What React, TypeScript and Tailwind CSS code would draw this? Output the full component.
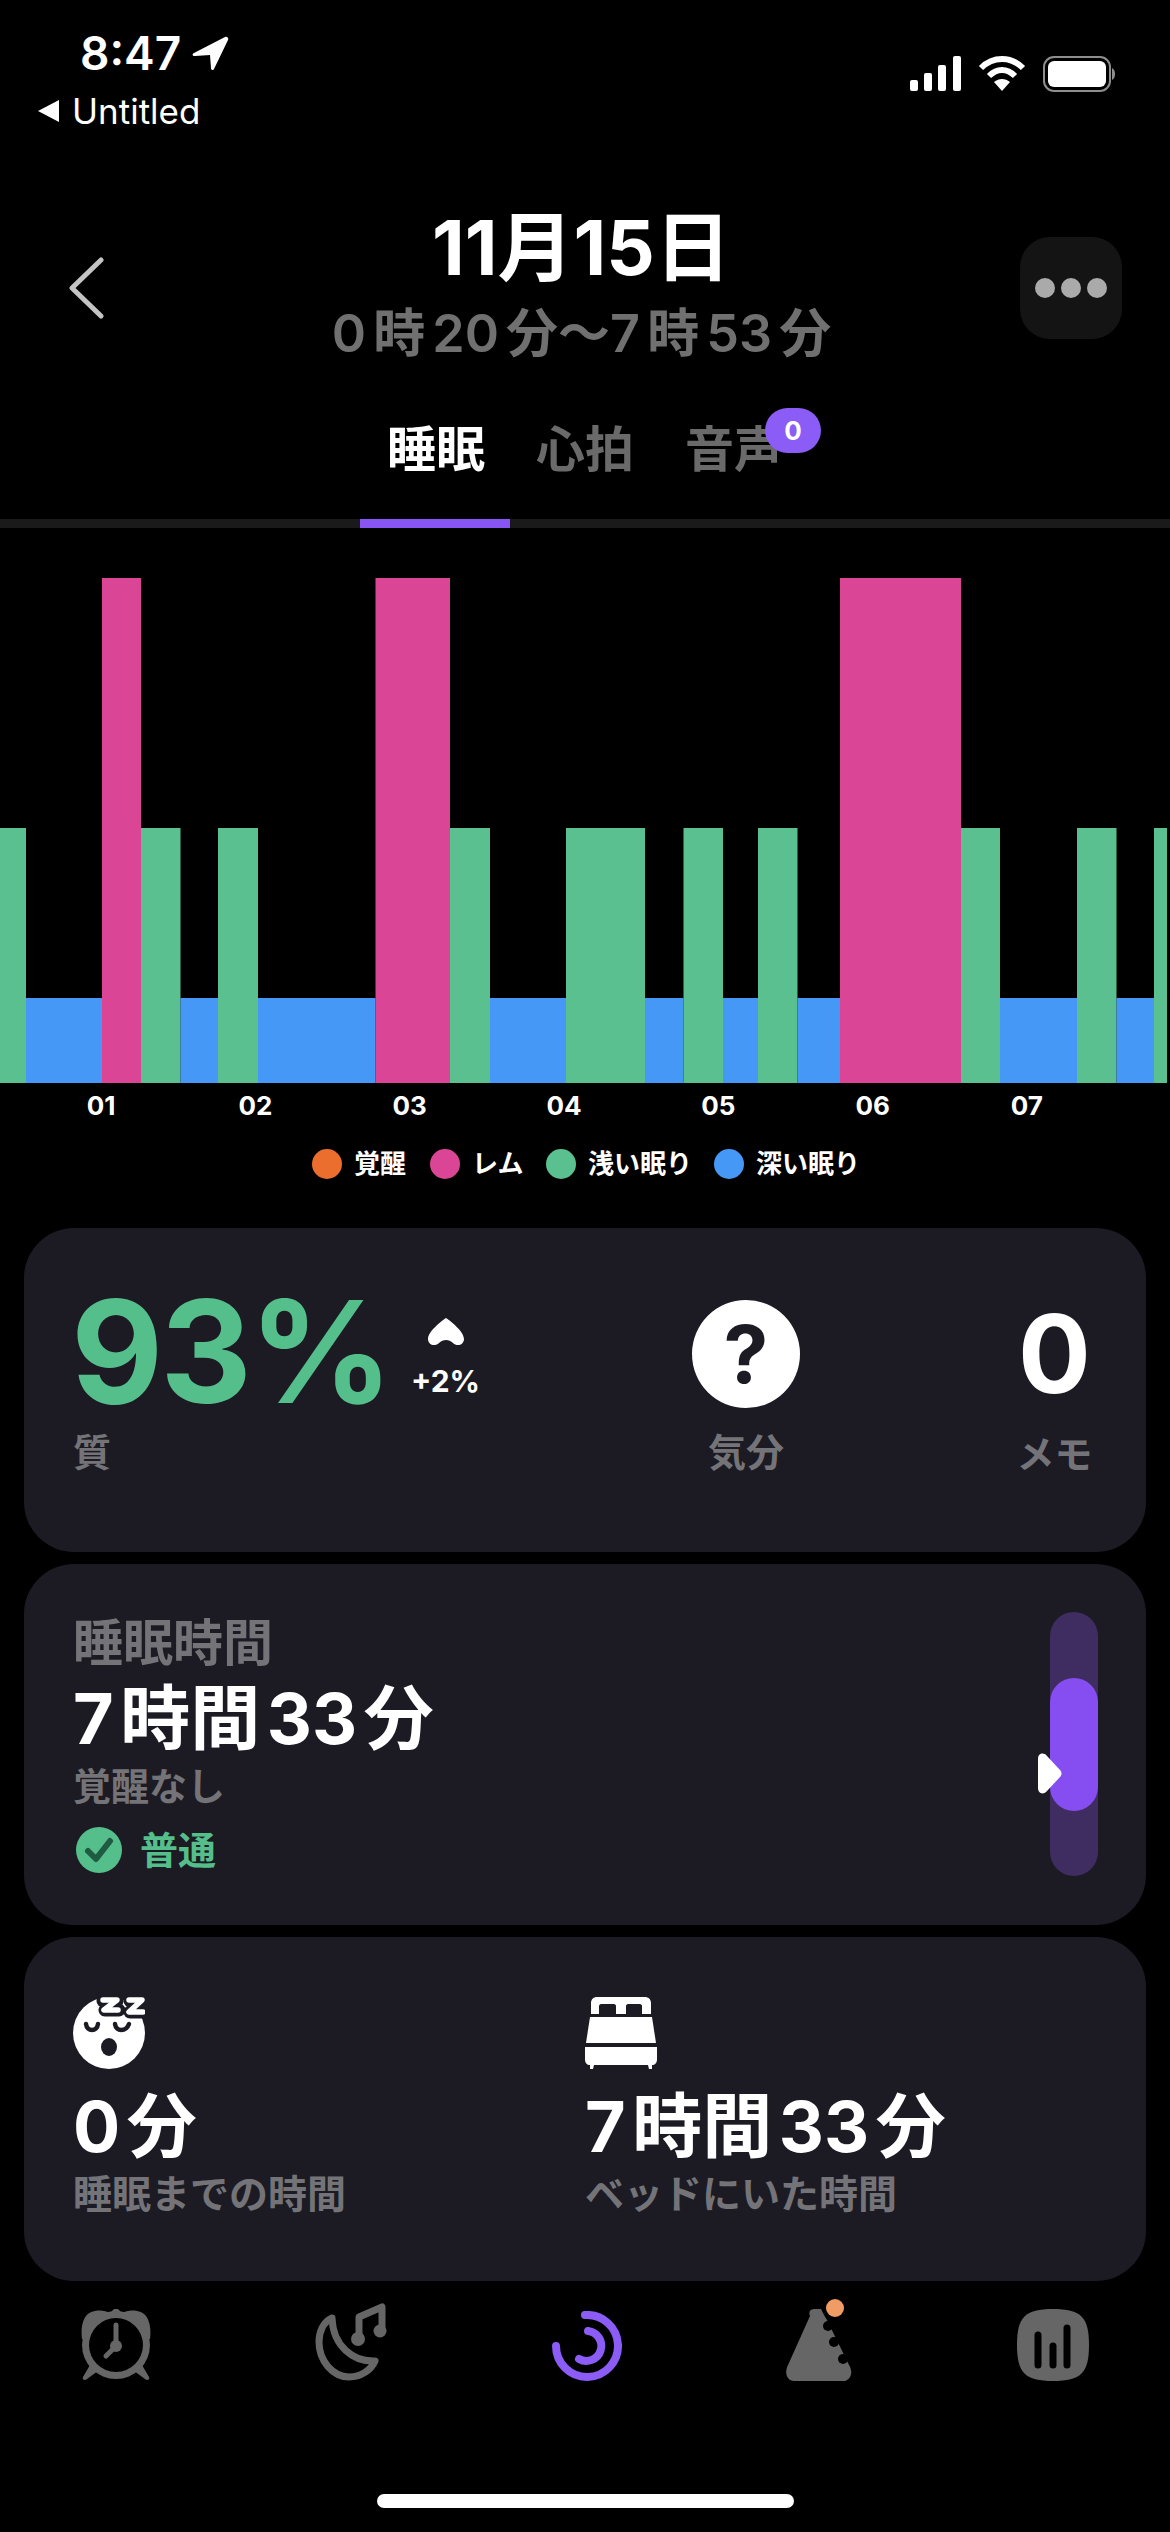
const sans = "font-[Inter,'Noto_Sans_CJK_JP',sans-serif]";

const segments: [number, number, string][] = [
  [0, 26, "green"], [26, 102, "blue"], [102, 141, "pink"], [141, 180.5, "green"],
  [180.5, 218, "blue"], [218, 258, "green"], [258, 375.5, "blue"], [375.5, 450, "pink"],
  [450, 490, "green"], [490, 566, "blue"], [566, 645, "green"], [645, 683.5, "blue"],
  [683.5, 723, "green"], [723, 758, "blue"], [758, 797.5, "green"], [797.5, 840, "blue"],
  [840, 961, "pink"], [961, 1000, "green"], [1000, 1077, "blue"], [1077, 1116.5, "green"],
  [1116.5, 1154, "blue"], [1154, 1167, "green"],
];

const stage: Record<string, { y: number; color: string }> = {
  pink: { y: 0, color: "#da4595" },
  green: { y: 250, color: "#5ac08f" },
  blue: { y: 420, color: "#4698f7" },
};

const legend = [
  { label: "覚醒", color: "bg-[#ec6e2e]", w: "w-[50px]", gap: "mr-[26px]" },
  { label: "レム", color: "bg-[#da4595]", w: "w-[47px]", gap: "mr-[27px]" },
  { label: "浅い眠り", color: "bg-[#5ac08f]", w: "w-[99px]", gap: "mr-[27px]" },
  { label: "深い眠り", color: "bg-[#4698f7]", w: "w-[97px]", gap: "" },
];

function Chart() {
  return (
    <svg width="1170" height="505" viewBox="0 0 1170 505" className="block mt-[50px]">
      {segments.map(([a, b, k]) => (
        <rect key={a} x={a} y={stage[k].y} width={b - a} height={505 - stage[k].y} fill={stage[k].color} />
      ))}
    </svg>
  );
}

function StatusIcons() {
  return (
    <div className="flex items-start gap-[17px] pt-[56px] pr-[55px]">
      <svg width="51" height="35" viewBox="0 0 51 35" fill="#fff">
        <rect x="0" y="24" width="8" height="11" rx="2" />
        <rect x="14" y="17" width="8" height="18" rx="2" />
        <rect x="28" y="9" width="8" height="26" rx="2" />
        <rect x="43" y="0" width="8" height="35" rx="2" />
      </svg>
      <svg width="48" height="35" viewBox="0 0 48 35" fill="none" stroke="#fff" strokeWidth="6">
        <path d="M3 12 C15 0 33 0 45 12" />
        <path d="M11 20 C19 12 29 12 37 20" />
        <path d="M24 35 L16 26 C21 22 27 22 32 26 Z" fill="#fff" stroke="none" />
      </svg>
      <svg width="72" height="36" viewBox="0 0 72 36">
        <rect x="1" y="1" width="66" height="34" rx="10" fill="none" stroke="#8e8e8e" strokeWidth="2" />
        <rect x="5" y="5" width="58" height="26" rx="6" fill="#fff" />
        <path d="M69 12 C71 13 72 15 72 18 C72 21 71 23 69 24 Z" fill="#8e8e8e" />
      </svg>
    </div>
  );
}

function StatusBar() {
  return (
    <div className="flex justify-between h-[130px]">
      <div className="flex flex-col">
        <div className="flex items-center gap-[11px] pl-[80px] pt-[27px]">
          <span className={`${sans} text-[46px] leading-[52px] font-semibold text-white`}>8:47</span>
          <svg width="37" height="34" viewBox="0 0 37 34" fill="#fff">
            <path d="M2 17 L33 1 C35 0 37 2 36 4 L22 33 C21 35 19 34 19 32 L18 19 L3 20 C0 20 0 18 2 17 Z" />
          </svg>
        </div>
        <div className="flex items-center gap-[13px] pl-[38px] mt-[11px]">
          <svg width="21" height="22" viewBox="0 0 21 22" fill="#fff">
            <path d="M0 11 L21 0 V22 Z" />
          </svg>
          <span className={`${sans} text-[35px] leading-[42px] text-white`}>Untitled</span>
        </div>
      </div>
      <StatusIcons />
    </div>
  );
}

function Header() {
  return (
    <div className="flex items-center h-[160px] mt-[78px]">
      <div className="w-[143px] pl-[68px]">
        <svg width="36" height="62" viewBox="0 0 36 62" fill="none" stroke="#c4c4c4" strokeWidth="5" strokeLinecap="round" strokeLinejoin="round" className="block">
          <path d="M33 3 L4 31 L33 59" />
        </svg>
      </div>
      <div className="flex-1 flex flex-col items-center">
        <div className={`${sans} text-[76px] leading-[84px] font-bold text-white`}>11月15日</div>
        <div className={`${sans} text-[52px] leading-[62px] font-semibold text-[#707070] mt-[14px] mb-[6px] [word-spacing:-6px]`}>0 時 20 分〜7 時 53 分</div>
      </div>
      <div className="w-[150px]">
        <div className="w-[102px] h-[102px] rounded-[30px] bg-[#141414] flex items-center justify-center gap-[6px]">
          <span className="w-[20px] h-[20px] rounded-full bg-[#aaaaaa]" />
          <span className="w-[20px] h-[20px] rounded-full bg-[#aaaaaa]" />
          <span className="w-[20px] h-[20px] rounded-full bg-[#aaaaaa]" />
        </div>
      </div>
    </div>
  );
}

function Tabs() {
  return (
    <div className="mt-[54px]">
      <div className={`${sans} flex text-[49px] leading-[56px] font-bold pl-[387px] gap-[51px] h-[56px]`}>
        <span className="text-white">睡眠</span>
        <span className="text-[#6a6a6a]">心拍</span>
        <span className="relative text-[#6a6a6a]">
          音声
          <span className="absolute left-[80px] top-[-14px] w-[56px] h-[45px] rounded-full bg-[#8b5cf6] text-white text-[26px] leading-[45px] text-center">0</span>
        </span>
      </div>
      <div className="h-[9px] bg-[#1a1a1a] mt-[41px]">
        <div className="ml-[360px] w-[150px] h-full bg-[#8855f5]" />
      </div>
    </div>
  );
}

function Axis() {
  return (
    <div className={`${sans} flex pl-[24px] mt-[9px] text-[26px] leading-[28px] font-bold text-white`}>
      {["01", "02", "03", "04", "05", "06", "07"].map((h) => (
        <span key={h} className="w-[154.3px] text-center">{h}</span>
      ))}
    </div>
  );
}

function Legend() {
  return (
    <div className={`${sans} flex items-center pl-[312px] mt-[29px] text-[26px] leading-[30px] font-bold text-white h-[30px]`}>
      {legend.map((l) => (
        <div key={l.label} className={`flex items-center gap-[12px] ${l.gap}`}>
          <span className={`w-[30px] h-[30px] rounded-full ${l.color}`} />
          <span className={`${l.w} whitespace-nowrap`}>{l.label}</span>
        </div>
      ))}
    </div>
  );
}

function QualityCard() {
  return (
    <div className={`${sans} mx-[24px] mt-[49px] h-[324px] rounded-[50px] bg-[#1c1b24] flex`}>
      <div className="flex flex-col w-[622px] pl-[49px]">
        <div className="flex pt-[48px]">
          <span className="text-[142px] leading-[150px] font-bold text-[#55bf8c] w-[340px] ml-[-2px] tracking-[-3px]">93%</span>
          <div className="flex flex-col items-center w-[69px] pt-[42px]">
            <svg width="36" height="28" viewBox="0 0 36 28" fill="#fff">
              <path d="M18 0 C24 4 36 14 36 21 C36 27 29 29 25 25 C21 21 15 21 11 25 C7 29 0 27 0 21 C0 14 12 4 18 0 Z" />
            </svg>
            <span className="text-[30px] leading-[30px] font-bold text-white mt-[20px] whitespace-nowrap">+2%</span>
          </div>
        </div>
        <span className="text-[38px] leading-[46px] font-bold text-[#747478] mt-[3px]">質</span>
      </div>
      <div className="flex flex-col items-center w-[200px] pt-[72px]">
        <div className="w-[108px] h-[108px] rounded-full bg-white flex items-center justify-center text-[#1c1b24] text-[80px] leading-[80px] font-bold">?</div>
        <span className="text-[38px] leading-[46px] font-bold text-[#747478] mt-[21px]">気分</span>
      </div>
      <div className="flex flex-col items-center w-[147px] ml-[135px] pt-[70px]">
        <span className="text-[108px] leading-[112px] font-bold text-white">0</span>
        <span className="text-[38px] leading-[46px] font-bold text-[#747478] mt-[21px]">メモ</span>
      </div>
    </div>
  );
}

function DurationCard() {
  return (
    <div className={`${sans} mx-[24px] mt-[12px] h-[361px] rounded-[50px] bg-[#1c1b24] flex justify-between`}>
      <div className="flex flex-col pl-[49px] pt-[50px]">
        <span className="text-[50px] leading-[58px] font-bold text-[#747478]">睡眠時間</span>
        <span className="text-[70px] leading-[76px] font-bold text-white mt-[9px] [word-spacing:-10px]">7 時間 33 分</span>
        <span className="text-[38px] leading-[46px] font-bold text-[#747478] mt-[6px]">覚醒なし</span>
        <div className="flex items-center gap-[18px] mt-[18px]">
          <svg width="46" height="46" viewBox="0 0 46 46" className="ml-[3px]">
            <circle cx="23" cy="23" r="23" fill="#55bf8c" />
            <path d="M12 24 L20 32 L34 14" fill="none" stroke="#1f5a42" strokeWidth="6" strokeLinecap="round" strokeLinejoin="round" />
          </svg>
          <span className="text-[38px] leading-[46px] font-bold text-[#55bf8c]">普通</span>
        </div>
      </div>
      <div className="relative w-[48px] h-[264px] mt-[48px] mr-[48px] pt-[66px] rounded-full bg-[#3f2c60]">
        <div className="h-[133px] rounded-full bg-[#864df0]" />
        <svg width="24" height="41" viewBox="0 0 24 41" fill="#fff" className="absolute left-[-12px] top-[141px]">
          <path d="M0 6 C0 0 6 -1 9 3 L22 17 C24 19 24 22 22 24 L9 38 C6 42 0 41 0 35 Z" />
        </svg>
      </div>
    </div>
  );
}

function FaceIcon() {
  return (
    <svg width="72" height="72" viewBox="0 0 72 72">
      <ellipse cx="36" cy="36" rx="36" ry="36" fill="#fff" />
      <path d="M30 4 H44 L32 13 H46 M57 4 H69 L57 15 H70" fill="none" stroke="#1c1b24" strokeWidth="13" strokeLinejoin="round" strokeLinecap="round" />
      <path d="M30 3 H44 L31 13 H45 M56 3 H69 L56 15 H70" fill="none" stroke="#fff" strokeWidth="5.5" strokeLinejoin="round" strokeLinecap="round" />
      <path d="M13 27 C14 35 24 35 25 27 M42 27 C43 35 53 35 56 27" fill="none" stroke="#1c1b24" strokeWidth="4.5" strokeLinecap="round" />
      <ellipse cx="36" cy="50" rx="8" ry="9" fill="#1c1b24" />
    </svg>
  );
}

function BedIcon() {
  return (
    <svg width="72" height="72" viewBox="0 0 72 72" fill="#fff">
      <path d="M6 17 V6 C6 2 9 0 12 0 H60 C63 0 66 2 66 6 V17 H57 V9 C57 8 56 7 55 7 H43 C42 7 41 8 41 9 V17 H31 V9 C31 8 30 7 29 7 H16 C15 7 14 8 14 9 V17 Z" />
      <path d="M5 20 H67 L71 46 H1 Z" />
      <path d="M0 50 H72 V62 C72 66 70 68 67 68 V72 H64 L63 68 H9 L8 72 H5 V68 C2 68 0 66 0 62 Z" />
    </svg>
  );
}

function InBedCard() {
  return (
    <div className={`${sans} mx-[24px] mt-[12px] h-[344px] rounded-[50px] bg-[#1c1b24] flex`}>
      <div className="flex flex-col w-[561px] pl-[49px] pt-[60px]">
        <FaceIcon />
        <span className="text-[70px] leading-[76px] font-bold text-white mt-[20px] [word-spacing:-10px]">0 分</span>
        <span className="text-[39px] leading-[46px] font-bold text-[#747478] mt-[6px]">睡眠までの時間</span>
      </div>
      <div className="flex flex-col pt-[60px]">
        <BedIcon />
        <span className="text-[70px] leading-[76px] font-bold text-white mt-[20px] [word-spacing:-10px]">7 時間 33 分</span>
        <span className="text-[39px] leading-[46px] font-bold text-[#747478] mt-[6px]">ベッドにいた時間</span>
      </div>
    </div>
  );
}

function BottomNav() {
  return (
    <div className="flex items-end justify-between h-[100px] pl-[81px] pr-[81px]">
      <svg width="70" height="72" viewBox="0 0 70 72" fill="#666">
        <path d="M1 30 C-1 14 4 3 14 2 C20 1 25 2 29 4 L33 0 L37 0 L41 4 C45 2 50 1 56 2 C66 3 71 14 69 30 Z" />
        <path d="M9 56 L2 68 C1 71 4 72 6 70 L17 62 Z M61 56 L68 68 C69 71 66 72 64 70 L53 62 Z" />
        <circle cx="35" cy="36" r="34" />
        <circle cx="35" cy="36" r="27" fill="#000" />
        <path d="M35 16 V37 L25 47" fill="none" stroke="#666" strokeWidth="5" strokeLinecap="round" strokeLinejoin="round" />
        <circle cx="35" cy="37" r="6" />
      </svg>
      <svg width="73" height="78" viewBox="0 0 73 78">
        <path d="M17 15 C8 19 4 29 4 39 C4 58 18 74 34 74 C46 74 56 67 60 58 C38 59 18 43 17 15 Z" fill="none" stroke="#666" strokeWidth="7" strokeLinejoin="round" />
        <path d="M44 36 V14 L67 4 V28" fill="none" stroke="#666" strokeWidth="7" strokeLinejoin="round" strokeLinecap="round" />
        <circle cx="43" cy="36" r="7" fill="#666" />
        <circle cx="65" cy="28" r="6.5" fill="#666" />
      </svg>
      <svg width="70" height="70" viewBox="0 0 70 70" fill="none" stroke="#8b5cf6" strokeLinecap="round">
        <path d="M4 35 A31 31 0 1 0 33 4" strokeWidth="8" />
        <path d="M27 48 A15 15 0 1 0 36 20" strokeWidth="8" />
      </svg>
      <svg width="68" height="82" viewBox="0 0 68 82">
        <path d="M25 17 C23 12 26 10 30 10 H36 C38 14 40 18 42 21 L64 66 C69 74 65 82 58 82 H9 C2 82 -1 74 3 66 Z" fill="#666" />
        <circle cx="43" cy="27" r="5" fill="#000" />
        <circle cx="49" cy="43" r="5" fill="#000" />
        <circle cx="58" cy="60" r="5" fill="#000" />
        <ellipse cx="50" cy="9" rx="9" ry="9" fill="#f09c64" />
      </svg>
      <svg width="72" height="72" viewBox="0 0 72 72">
        <path d="M36 0 C64 0 72 8 72 36 C72 64 64 72 36 72 C8 72 0 64 0 36 C0 8 8 0 36 0 Z" fill="#666" />
        <path d="M21 26 V56 M36 37 V56 M50 19 V56" fill="none" stroke="#000" strokeWidth="7" strokeLinecap="round" />
      </svg>
    </div>
  );
}

export default function App() {
  return (
    <div className="w-[1170px] h-[2532px] bg-black overflow-hidden">
      <StatusBar />
      <Header />
      <Tabs />
      <Chart />
      <Axis />
      <Legend />
      <QualityCard />
      <DurationCard />
      <InBedCard />
      <BottomNav />
      <div className="mx-auto mt-[113px] w-[417px] h-[14px] rounded-full bg-white" />
    </div>
  );
}
